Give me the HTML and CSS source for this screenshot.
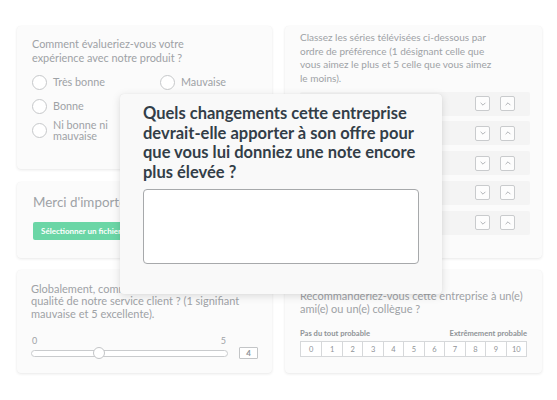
FILE: index.html
```html
<!DOCTYPE html>
<html lang="fr">
<head>
<meta charset="utf-8">
<link rel="stylesheet" href="styles.css">
</head>
<body>
<div class="page">
  <div class="left-stack">
    <section class="card card-rating">
      <p class="q">Comment évalueriez-vous votre<br>expérience avec notre produit ?</p>
      <div class="radios">
        <label class="radio"><span class="dot"></span><span>Très bonne</span></label>
        <label class="radio"><span class="dot"></span><span>Mauvaise</span></label>
        <label class="radio"><span class="dot"></span><span>Bonne</span></label>
        <span></span>
        <label class="radio"><span class="dot"></span><span class="two">Ni bonne ni<br>mauvaise</span></label>
      </div>
    </section>
    <section class="card card-upload">
      <p class="q-big">Merci d'importer un fichier</p>
      <button class="btn">Sélectionner un fichier</button>
    </section>
  </div>
  <section class="card card-rank">
    <p class="q">Classez les séries télévisées ci-dessous par<br>ordre de préférence (1 désignant celle que<br>vous aimez le plus et 5 celle que vous aimez<br>le moins).</p>
    <div class="rows">
      <div class="row"><span class="arrow"><svg viewBox="0 0 10 10"><path d="M3 4 L5 6 L7 4"/></svg></span><span class="arrow"><svg viewBox="0 0 10 10"><path d="M3 6 L5 4 L7 6"/></svg></span></div>
      <div class="row"><span class="arrow"><svg viewBox="0 0 10 10"><path d="M3 4 L5 6 L7 4"/></svg></span><span class="arrow"><svg viewBox="0 0 10 10"><path d="M3 6 L5 4 L7 6"/></svg></span></div>
      <div class="row"><span class="arrow"><svg viewBox="0 0 10 10"><path d="M3 4 L5 6 L7 4"/></svg></span><span class="arrow"><svg viewBox="0 0 10 10"><path d="M3 6 L5 4 L7 6"/></svg></span></div>
      <div class="row"><span class="arrow"><svg viewBox="0 0 10 10"><path d="M3 4 L5 6 L7 4"/></svg></span><span class="arrow"><svg viewBox="0 0 10 10"><path d="M3 6 L5 4 L7 6"/></svg></span></div>
      <div class="row"><span class="arrow"><svg viewBox="0 0 10 10"><path d="M3 4 L5 6 L7 4"/></svg></span><span class="arrow"><svg viewBox="0 0 10 10"><path d="M3 6 L5 4 L7 6"/></svg></span></div>
    </div>
  </section>
  <section class="card card-slider">
    <p class="q">Globalement, comment évaluez-vous la<br>qualité de notre service client ? (1 signifiant<br>mauvaise et 5 excellente).</p>
    <div class="slider">
      <div class="track-wrap">
        <div class="scale"><span>0</span><span>5</span></div>
        <div class="track"><span class="thumb"></span></div>
      </div>
      <span class="value">4</span>
    </div>
  </section>
  <section class="card card-nps">
    <p class="q-nps">Recommanderiez-vous cette entreprise à un(e)<br>ami(e) ou un(e) collègue ?</p>
    <div class="nps-labels"><span>Pas du tout probable</span><span>Extrêmement probable</span></div>
    <div class="nps">
      <span>0</span><span>1</span><span>2</span><span>3</span><span>4</span><span>5</span><span>6</span><span>7</span><span>8</span><span>9</span><span>10</span>
    </div>
  </section>
</div>
<div class="modal">
  <h2 class="modal-title">Quels changements cette entreprise<br>devrait-elle apporter à son offre pour<br>que vous lui donniez une note encore<br>plus élevée ?</h2>
  <div class="textarea"></div>
</div>
</body>
</html>
```
FILE: styles.css
```css
* { box-sizing: border-box; }
html, body { margin: 0; padding: 0; background: #fff; }
body {
  width: 557px; height: 400px; overflow: hidden; position: relative;
  font-family: Lato, "Liberation Sans", sans-serif;
  color: #9ea2a6;
}
p { margin: 0; white-space: nowrap; }
.page {
  display: grid;
  grid-template-columns: 255px 257px;
  grid-template-rows: 232px 103px;
  column-gap: 13px;
  row-gap: 12px;
  padding: 26px 0 0 17px;
}
.left-stack { display: flex; flex-direction: column; gap: 13px; }
.card {
  background: #fbfbfb;
  border-radius: 4px;
  box-shadow: 0 1px 3px rgba(0,0,0,0.09), 0 0 1px rgba(0,0,0,0.05);
}
.q { font-size: 10.9px; line-height: 14px; }
.card-rating { height: 143px; padding: 11px 15px 0 15px; }
.radios {
  display: grid;
  grid-template-columns: 128px 1fr;
  grid-auto-rows: 24px;
  align-items: center;
  margin-top: 5px;
  font-size: 10.8px;
  line-height: 11.5px;
}
.radio { display: flex; align-items: center; gap: 6px; }
.dot {
  width: 15px; height: 15px; border-radius: 50%;
  border: 1px solid #c6c8ca; background: #fff; flex: none;
}
.card-upload { flex: 1; padding: 12px 16px 0 16px; }
.q-big { font-size: 13.4px; line-height: 16px; }
.btn {
  display: block; margin-top: 12px;
  height: 18px; padding: 0 8px;
  border: none; border-radius: 2px;
  background: #6bd6a6; color: #fff;
  font-family: Lato, "Liberation Sans", sans-serif;
  font-size: 8px; font-weight: 700;
}
.card-rank { padding: 5px 12px 0 15px; }
.card-rank .q { font-size: 10px; line-height: 13.5px; }
.rows { display: flex; flex-direction: column; gap: 5.8px; margin-top: 6.5px; }
.row {
  height: 24px; background: #f4f4f4; border-radius: 2px;
  display: flex; align-items: center; justify-content: flex-end;
  gap: 10px; padding-right: 15px;
}
.arrow {
  width: 15px; height: 15px; border: 1px solid #c9cbcd; border-radius: 2px;
  background: #fdfdfd; display: flex; align-items: center; justify-content: center;
}
.arrow svg { width: 12px; height: 12px; }
.arrow path { fill: none; stroke: #aeb1b4; stroke-width: 0.8; }
.card-slider { padding: 12.5px 14px 0 14px; }
.card-slider .q { font-size: 11px; line-height: 12.5px; }
.slider { display: flex; align-items: flex-end; gap: 11px; margin-top: 15.5px; }
.track-wrap { width: 197px; }
.scale { display: flex; justify-content: space-between; font-size: 9px; line-height: 10px; padding: 0 2px 0 1px; }
.track {
  position: relative; margin-top: 4px; height: 7px;
  border: 1px solid #c9cbcd; border-radius: 4px; background: #fff;
}
.thumb {
  position: absolute; left: 61px; top: -4px;
  width: 12px; height: 12px; border-radius: 50%;
  border: 1px solid #c3c5c7; background: #fff;
}
.value {
  width: 19px; height: 12px; border: 1px solid #c3c5c7; border-radius: 1px;
  background: #fff; font-size: 8px; font-weight: 700; color: #8e9296;
  display: flex; align-items: center; justify-content: center;
  margin-bottom: -2px;
}
.card-nps { padding: 20px 15px 0 15px; }
.q-nps { font-size: 11px; line-height: 12.5px; }
.nps-labels {
  display: flex; justify-content: space-between;
  margin-top: 13px; font-size: 7.6px; font-weight: 700; color: #8f9397;
}
.nps {
  display: grid; grid-template-columns: repeat(11, 1fr);
  margin-top: 3px; height: 16px;
  border: 1px solid #d6d8da; background: #fff;
}
.nps span {
  display: flex; align-items: center; justify-content: center;
  font-size: 7.5px; color: #8f9397; border-left: 1px solid #d6d8da;
}
.nps span:first-child { border-left: none; }
.modal {
  position: absolute; left: 120px; top: 94px;
  width: 322px; height: 200px;
  background: #f9f9f9; border-radius: 4px;
  box-shadow: 0 2px 8px rgba(0,0,0,0.13), 0 0 1px rgba(0,0,0,0.1);
  padding: 10px 22px 0 23px;
}
.modal-title {
  margin: 0; font-size: 16.5px; line-height: 19.5px; font-weight: 700;
  color: #333e48; white-space: nowrap;
}
.textarea {
  margin-top: 7px; width: 276px; height: 75px;
  background: #fff; border: 1.5px solid #a7a9ab; border-radius: 4px;
}
```
